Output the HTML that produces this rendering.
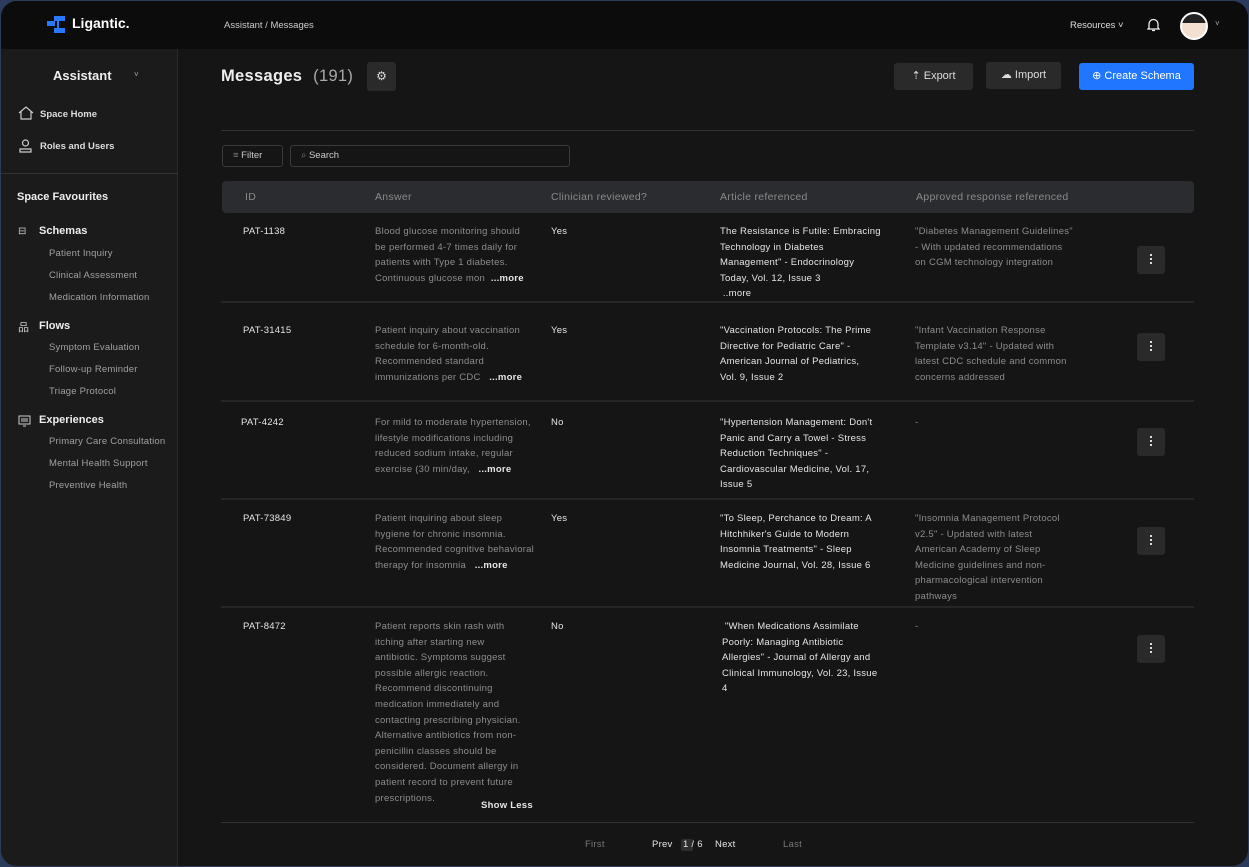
<!DOCTYPE html>
<html><head><meta charset="utf-8"><style>
*{margin:0;padding:0;box-sizing:border-box}
body{width:1249px;height:867px;background:#2b3b5c;font-family:"Liberation Sans",sans-serif;overflow:hidden;position:relative}
.frame{position:absolute;left:1px;top:1px;width:1247px;height:865px;border-radius:16px;overflow:hidden;background:#151515}
.top{position:absolute;left:0;top:0;width:100%;height:48px;background:#0c0c0c}
.side{position:absolute;left:0;top:48px;width:177px;height:820px;background:#1b1b1b;border-right:1px solid #2a2a2a}
.a{position:absolute;white-space:nowrap}
.t{position:absolute;font-size:9.5px;line-height:15.6px;color:#8d8d8d;letter-spacing:0.25px}
.w{color:#e6e6e6}
.m{color:#e6e6e6;font-weight:bold}
.hr{position:absolute;left:220px;width:973px;height:2px;background:#262626}
.keb{position:absolute;left:1136px;width:28px;height:28px;background:#2a2a2a;border-radius:3px}
.keb::after{content:"";position:absolute;left:13px;top:8px;width:2px;height:2px;background:#ddd;box-shadow:0 4px #ddd,0 8px #ddd}
.btn{position:absolute;top:62px;height:27px;border-radius:3px;background:#2a2a2a;color:#ddd;font-size:11px;line-height:27px;text-align:center}
.sl{position:absolute;left:48px;font-size:9.5px;color:#a0a0a0;letter-spacing:0.2px}
.sh{position:absolute;left:38px;font-size:11px;color:#eee;font-weight:bold}
</style></head><body><div class="frame">
<div class="top">
 <svg class="a" style="left:45px;top:13px" width="24" height="22" viewBox="0 0 24 22"><rect x="1" y="7" width="8" height="5" fill="#2979ff"/><rect x="8" y="2" width="11" height="5" fill="#2979ff"/><rect x="8" y="14" width="11" height="5" fill="#2979ff"/><rect x="11" y="5" width="2" height="11" fill="#2979ff"/></svg>
 <div class="a" style="left:71px;top:14px;color:#fff;font-size:14px;font-weight:bold">Ligantic.</div>
 <div class="a" style="left:223px;top:19px;color:#ccc;font-size:9.5px">Assistant / Messages</div>
 <div class="a" style="left:1069px;top:19px;color:#ddd;font-size:9.5px">Resources ˅</div>
 <svg class="a" style="left:1146px;top:17px" width="13" height="14" viewBox="0 0 13 14"><path d="M2 10V6a4.5 4.5 0 0 1 9 0v4l1 1H1z M5 12.5h3" stroke="#eee" stroke-width="1.3" fill="none"/></svg>
 <div class="a" style="left:1179px;top:11px;width:28px;height:28px;border-radius:50%;background:#f3e0d0;border:2px solid #fff;overflow:hidden"><div style="height:9px;background:#222"></div></div>
 <div class="a" style="left:1214px;top:18px;color:#aaa;font-size:8px">˅</div>
</div>
<div class="side">
 <div class="a" style="left:52px;top:19px;color:#eee;font-size:13px;font-weight:bold">Assistant</div>
 <div class="a" style="left:133px;top:21px;color:#aaa;font-size:8px">˅</div>
 <svg class="a" style="left:17px;top:57px" width="16" height="14" viewBox="0 0 16 14"><path d="M1 7L8 1l7 6M3 5.5V13h10V5.5" stroke="#ccc" stroke-width="1.2" fill="none"/></svg>
 <div class="a" style="left:39px;top:60px;color:#ddd;font-size:9.5px;font-weight:bold">Space Home</div>
 <svg class="a" style="left:18px;top:90px" width="13" height="14" viewBox="0 0 13 14"><circle cx="6.5" cy="4" r="3" stroke="#ccc" fill="none" stroke-width="1.2"/><path d="M1 13v-3h11v3z" stroke="#ccc" fill="none" stroke-width="1.2"/></svg>
 <div class="a" style="left:39px;top:92px;color:#ddd;font-size:9.5px;font-weight:bold">Roles and Users</div>
 <div class="a" style="left:0;top:124px;width:177px;height:1px;background:#333"></div>
 <div class="a" style="left:16px;top:142px;color:#eee;font-size:11px;font-weight:bold">Space Favourites</div>
 <div class="a" style="left:17px;top:177px;color:#ccc;font-size:10px">⊟</div>
 <div class="sh" style="top:176px">Schemas</div>
 <div class="sl" style="top:199px">Patient Inquiry</div>
 <div class="sl" style="top:221px">Clinical Assessment</div>
 <div class="sl" style="top:243px">Medication Information</div>
 <div class="a" style="left:17px;top:270px;color:#ccc;font-size:11px">品</div>
 <div class="sh" style="top:271px">Flows</div>
 <div class="sl" style="top:293px">Symptom Evaluation</div>
 <div class="sl" style="top:315px">Follow-up Reminder</div>
 <div class="sl" style="top:337px">Triage Protocol</div>
 <svg class="a" style="left:17px;top:366px" width="13" height="12" viewBox="0 0 13 12"><rect x="1" y="1" width="11" height="8" stroke="#ccc" fill="none"/><path d="M3 4h7M3 6h7M5 11h3" stroke="#ccc"/></svg>
 <div class="sh" style="top:365px">Experiences</div>
 <div class="sl" style="top:387px">Primary Care Consultation</div>
 <div class="sl" style="top:409px">Mental Health Support</div>
 <div class="sl" style="top:431px">Preventive Health</div>
</div>
<div class="a" style="left:220px;top:66px;color:#eee;font-size:16.5px;font-weight:bold;letter-spacing:0.3px">Messages <span style="color:#aaa;font-weight:normal;margin-left:6px">(191)</span></div>
<div class="a" style="left:366px;top:61px;width:29px;height:29px;background:#2a2a2a;border-radius:3px;color:#ddd;font-size:12px;text-align:center;line-height:29px">⚙</div>
<div class="btn" style="left:893px;width:79px">⇡ Export</div>
<div class="btn" style="left:985px;width:75px;top:61px">☁ Import</div>
<div class="btn" style="left:1078px;width:115px;background:#2176ff;color:#fff">⊕ Create Schema</div>
<div class="hr" style="top:129px;height:1px;background:#333"></div>
<div class="a" style="left:221px;top:144px;width:61px;height:22px;border:1px solid #3a3a3a;border-radius:3px;color:#ccc;font-size:9.5px;line-height:20px;padding-left:10px"><span style="color:#777">≡</span> Filter</div>
<div class="a" style="left:289px;top:144px;width:280px;height:22px;border:1px solid #3a3a3a;border-radius:3px;color:#ccc;font-size:9.5px;line-height:20px;padding-left:10px"><span style="color:#777">⌕</span> Search</div>
<div class="a" style="left:221px;top:180px;width:972px;height:32px;background:#2b2c2f;border-radius:4px;color:#8a8a8a;font-size:10.5px;line-height:32px;letter-spacing:0.3px">
 <span class="a" style="left:23px">ID</span><span class="a" style="left:153px">Answer</span><span class="a" style="left:329px">Clinician reviewed?</span><span class="a" style="left:498px">Article referenced</span><span class="a" style="left:694px">Approved response referenced</span></div>

<div class="t w" style="left:242px;top:223px">PAT-1138</div>
<div class="t" style="left:374px;top:223px">Blood glucose monitoring should<br>be performed 4-7 times daily for<br>patients with Type 1 diabetes.<br>Continuous glucose mon &nbsp;<span class="m">...more</span></div>
<div class="t w" style="left:550px;top:223px">Yes</div>
<div class="t w" style="left:719px;top:223px">The Resistance is Futile: Embracing<br>Technology in Diabetes<br>Management" - Endocrinology<br>Today, Vol. 12, Issue 3<br>&nbsp;..more</div>
<div class="t" style="left:914px;top:223px">"Diabetes Management Guidelines"<br>- With updated recommendations<br>on CGM technology integration</div>
<div class="keb" style="top:245px"></div>
<div class="hr" style="top:300px"></div>

<div class="t w" style="left:242px;top:322px">PAT-31415</div>
<div class="t" style="left:374px;top:322px">Patient inquiry about vaccination<br>schedule for 6-month-old.<br>Recommended standard<br>immunizations per CDC &nbsp;&nbsp;<span class="m">...more</span></div>
<div class="t w" style="left:550px;top:322px">Yes</div>
<div class="t w" style="left:719px;top:322px">"Vaccination Protocols: The Prime<br>Directive for Pediatric Care" -<br>American Journal of Pediatrics,<br>Vol. 9, Issue 2</div>
<div class="t" style="left:914px;top:322px">"Infant Vaccination Response<br>Template v3.14" - Updated with<br>latest CDC schedule and common<br>concerns addressed</div>
<div class="keb" style="top:332px"></div>
<div class="hr" style="top:399px"></div>

<div class="t w" style="left:240px;top:414px">PAT-4242</div>
<div class="t" style="left:374px;top:414px">For mild to moderate hypertension,<br>lifestyle modifications including<br>reduced sodium intake, regular<br>exercise (30 min/day, &nbsp;&nbsp;<span class="m">...more</span></div>
<div class="t w" style="left:550px;top:414px">No</div>
<div class="t w" style="left:719px;top:414px">"Hypertension Management: Don't<br>Panic and Carry a Towel - Stress<br>Reduction Techniques" -<br>Cardiovascular Medicine, Vol. 17,<br>Issue 5</div>
<div class="t" style="left:914px;top:414px">-</div>
<div class="keb" style="top:427px"></div>
<div class="hr" style="top:497px"></div>

<div class="t w" style="left:242px;top:510px">PAT-73849</div>
<div class="t" style="left:374px;top:510px">Patient inquiring about sleep<br>hygiene for chronic insomnia.<br>Recommended cognitive behavioral<br>therapy for insomnia &nbsp;&nbsp;<span class="m">...more</span></div>
<div class="t w" style="left:550px;top:510px">Yes</div>
<div class="t w" style="left:719px;top:510px">"To Sleep, Perchance to Dream: A<br>Hitchhiker's Guide to Modern<br>Insomnia Treatments" - Sleep<br>Medicine Journal, Vol. 28, Issue 6</div>
<div class="t" style="left:914px;top:510px">"Insomnia Management Protocol<br>v2.5" - Updated with latest<br>American Academy of Sleep<br>Medicine guidelines and non-<br>pharmacological intervention<br>pathways</div>
<div class="keb" style="top:526px"></div>
<div class="hr" style="top:605px"></div>

<div class="t w" style="left:242px;top:618px">PAT-8472</div>
<div class="t" style="left:374px;top:618px">Patient reports skin rash with<br>itching after starting new<br>antibiotic. Symptoms suggest<br>possible allergic reaction.<br>Recommend discontinuing<br>medication immediately and<br>contacting prescribing physician.<br>Alternative antibiotics from non-<br>penicillin classes should be<br>considered. Document allergy in<br>patient record to prevent future<br>prescriptions.</div>
<div class="t m" style="left:480px;top:797px">Show Less</div>
<div class="t w" style="left:550px;top:618px">No</div>
<div class="t w" style="left:721px;top:618px">&nbsp;"When Medications Assimilate<br>Poorly: Managing Antibiotic<br>Allergies" - Journal of Allergy and<br>Clinical Immunology, Vol. 23, Issue<br>4</div>
<div class="t" style="left:914px;top:618px">-</div>
<div class="keb" style="top:634px"></div>
<div class="hr" style="top:821px;height:1px;background:#333"></div>

<div class="t" style="left:584px;top:836px;color:#777">First</div>
<div class="t w" style="left:651px;top:836px">Prev</div>
<div class="a" style="left:680px;top:838px;width:12px;height:12px;background:#2e2e2e;border-radius:2px"></div>
<div class="t w" style="left:682px;top:836px">1 / 6</div>
<div class="t w" style="left:714px;top:836px">Next</div>
<div class="t" style="left:782px;top:836px;color:#777">Last</div>
</div></body></html>
